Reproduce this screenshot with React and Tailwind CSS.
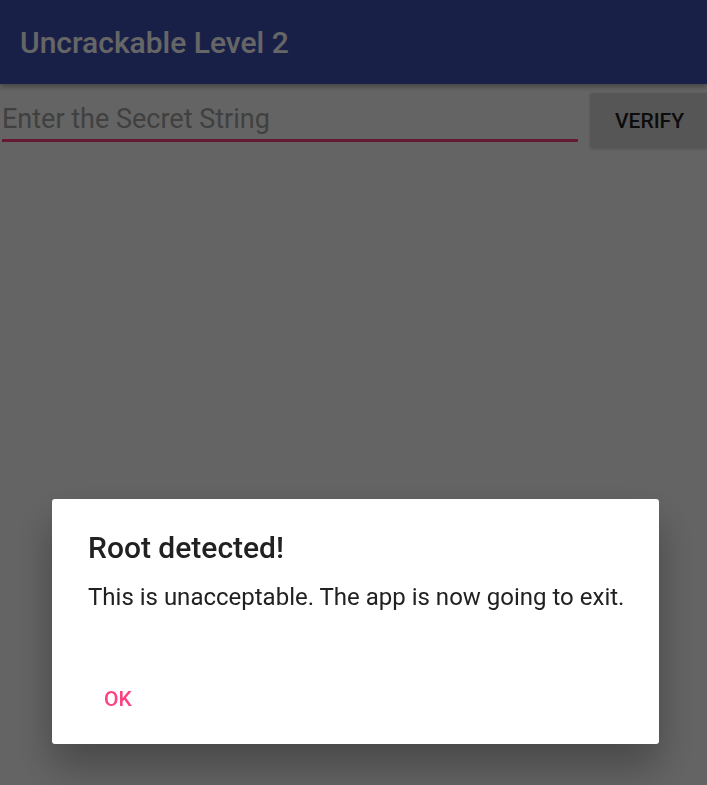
import React from "react";

function AppBar() {
  return (
    <header className="relative z-10 flex h-21 items-center bg-[#3f51b5] px-5 pt-0.5 shadow-[0_2px_6px_rgba(0,0,0,0.4)]">
      <h1 className="text-[30px] leading-9 font-medium text-white">Uncrackable Level 2</h1>
    </header>
  );
}

function SecretForm() {
  return (
    <form className="flex items-start gap-3 pt-2 pl-0.5" onSubmit={(e) => e.preventDefault()}>
      <input
        type="text"
        aria-label="Secret string"
        placeholder="Enter the Secret String"
        className="h-[50px] min-w-0 flex-1 border-b-3 border-[#ff4081] bg-transparent pt-1.5 text-[27px] leading-8 text-black outline-none placeholder:text-[#a0a0a0]"
      />
      <button
        type="submit"
        className="mt-px h-[55px] rounded-l-[3px] bg-[#d6d7d7] pr-[23px] pl-[25px] text-[21px] leading-6 font-medium text-[#1f1f1f] shadow-[0_1px_3px_rgba(0,0,0,0.2)]"
      >
        VERIFY
      </button>
    </form>
  );
}

function RootDialog() {
  return (
    <div className="fixed inset-0 z-20 flex items-end bg-black/60 pr-12 pb-[41px] pl-[52px]">
      <section
        role="alertdialog"
        aria-labelledby="dialog-title"
        aria-describedby="dialog-message"
        className="w-full rounded-[3px] bg-white pt-[31px] pr-6 pb-[21px] pl-9 shadow-[0_22px_40px_rgba(0,0,0,0.3)]"
      >
        <h2 id="dialog-title" className="text-[30px] leading-9 font-medium text-[#212121]">
          Root detected!
        </h2>
        <p id="dialog-message" className="mt-[15px] text-2xl leading-8 text-[#212121]">
          This is unacceptable. The app is now going to exit.
        </p>
        <button type="button" className="mt-[62px] h-12 px-4 text-[21px] leading-6 font-medium text-[#ff4081]">
          OK
        </button>
      </section>
    </div>
  );
}

export default function App() {
  return (
    <main className="min-h-screen bg-[#fafafa] font-[Roboto,sans-serif]">
      <AppBar />
      <SecretForm />
      <RootDialog />
    </main>
  );
}
